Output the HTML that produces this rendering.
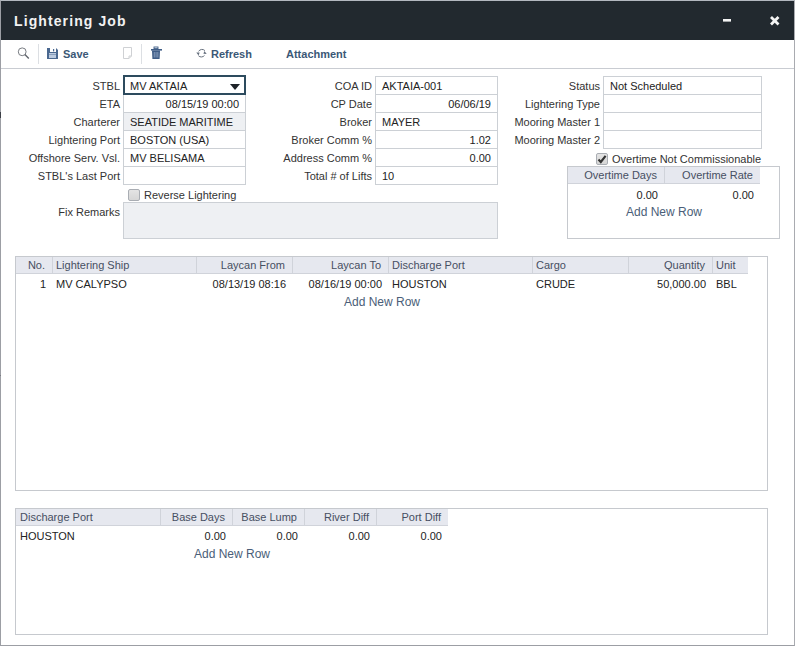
<!DOCTYPE html>
<html><head><meta charset="utf-8">
<style>
*{box-sizing:border-box;margin:0;padding:0}
html,body{width:795px;height:646px;overflow:hidden;background:#fff}
body{position:relative;font-family:"Liberation Sans",sans-serif;font-size:11px;color:#333}
.a{position:absolute;white-space:nowrap}
#win{position:absolute;left:0;top:0;width:795px;height:646px;border:1px solid #9c9ea4;border-top-color:#b3b8bf;border-right-color:#a9abb0}
#title{position:absolute;left:1px;top:1px;width:793px;height:39px;background:#22292f}
#title .t{position:absolute;left:13px;top:12px;font-size:14px;line-height:16px;font-weight:bold;letter-spacing:1.1px;color:#f2f2f2}
#tb{position:absolute;left:1px;top:40px;width:793px;height:29px;border-bottom:1px solid #c9ccd2;background:#fff}
.tbt{position:absolute;top:47px;font-weight:bold;color:#3b5876;line-height:14px}
.sep{position:absolute;top:44px;width:1px;height:20px;background:#dcdfe3}
.lbl{position:absolute;text-align:right;line-height:19px;height:19px;padding-top:1px;color:#333}
.inp{position:absolute;height:19px;border:1px solid #ccd0d5;background:#fff;line-height:17px;padding:1px 6px 0;color:#222}
.r{text-align:right}
.ro{background:#eef0f3}
.grid{position:absolute;border:1px solid #c6c9ce;background:#fff}
.gh{position:absolute;top:0;height:17px;background:#e6e8ef;border-bottom:1px solid #d0d3da;border-left:1px solid #d0d3da;line-height:16px;padding:0 7px 0 3px;color:#474f62}
.gd{position:absolute;line-height:14px;padding:0 6px 0 4px;color:#222}
.add{position:absolute;font-size:12px;line-height:14px;color:#4a5e78}
.cb{position:absolute;width:12px;height:12px;border:1px solid #a9adb3;border-radius:2px;background:linear-gradient(#e4e4e4,#d6d6d6)}
</style></head><body>
<div id="win"></div>
<div class="a" style="left:0;top:112px;width:1px;height:6px;background:#3c3f46"></div>
<div class="a" style="left:0;top:375px;width:1px;height:1px;background:#7a7c82"></div>
<div id="title"><div class="t">Lightering Job</div>
</div>
<div id="tb"></div>

<!-- toolbar text -->
<div class="a tbt" style="left:63px">Save</div>
<div class="a tbt" style="left:211px">Refresh</div>
<div class="a tbt" style="left:286px">Attachment</div>
<div class="sep" style="left:38px"></div>
<div class="sep" style="left:141px"></div>

<!-- Left column -->
<div class="lbl" style="left:0;width:120px;top:76px">STBL</div>
<div class="lbl" style="left:0;width:120px;top:94px">ETA</div>
<div class="lbl" style="left:0;width:120px;top:112px">Charterer</div>
<div class="lbl" style="left:0;width:120px;top:130px">Lightering Port</div>
<div class="lbl" style="left:0;width:120px;top:148px">Offshore Serv. Vsl.</div>
<div class="lbl" style="left:0;width:120px;top:166px">STBL's Last Port</div>

<div class="inp r" style="left:123px;top:94px;width:123px">08/15/19 00:00</div>
<div class="inp ro" style="left:123px;top:112px;width:123px">SEATIDE MARITIME</div>
<div class="inp" style="left:123px;top:130px;width:123px">BOSTON (USA)</div>
<div class="inp" style="left:123px;top:148px;width:123px">MV BELISAMA</div>
<div class="inp" style="left:123px;top:166px;width:123px"></div>
<div class="inp" style="left:123px;top:75px;width:123px;height:20px;border:2px solid #2d4b5e;padding-left:5px;line-height:16px">MV AKTAIA</div>
<svg class="a" style="left:230px;top:84px" width="10" height="6" viewBox="0 0 10 6"><path d="M0 0 H10 L5 6 Z" fill="#1e2328"/></svg>

<!-- Middle column -->
<div class="lbl" style="left:250px;width:122px;top:76px">COA ID</div>
<div class="lbl" style="left:250px;width:122px;top:94px">CP Date</div>
<div class="lbl" style="left:250px;width:122px;top:112px">Broker</div>
<div class="lbl" style="left:250px;width:122px;top:130px">Broker Comm %</div>
<div class="lbl" style="left:250px;width:122px;top:148px">Address Comm %</div>
<div class="lbl" style="left:250px;width:122px;top:166px">Total # of Lifts</div>
<div class="inp" style="left:375px;top:76px;width:123px">AKTAIA-001</div>
<div class="inp r" style="left:375px;top:94px;width:123px">06/06/19</div>
<div class="inp" style="left:375px;top:112px;width:123px">MAYER</div>
<div class="inp r" style="left:375px;top:130px;width:123px">1.02</div>
<div class="inp r" style="left:375px;top:148px;width:123px">0.00</div>
<div class="inp" style="left:375px;top:166px;width:123px">10</div>

<!-- Right column -->
<div class="lbl" style="left:480px;width:120px;top:76px">Status</div>
<div class="lbl" style="left:480px;width:120px;top:94px">Lightering Type</div>
<div class="lbl" style="left:480px;width:120px;top:112px">Mooring Master 1</div>
<div class="lbl" style="left:480px;width:120px;top:130px">Mooring Master 2</div>
<div class="inp" style="left:603px;top:76px;width:159px">Not Scheduled</div>
<div class="inp" style="left:603px;top:94px;width:159px"></div>
<div class="inp" style="left:603px;top:112px;width:159px"></div>
<div class="inp" style="left:603px;top:130px;width:159px"></div>

<!-- checkboxes -->
<div class="cb" style="left:596px;top:153px"></div>
<div class="a" style="left:612px;top:152px;line-height:14px">Overtime Not Commissionable</div>
<div class="cb" style="left:128px;top:189px"></div>
<div class="a" style="left:144px;top:188px;line-height:14px">Reverse Lightering</div>

<div class="lbl" style="left:0;width:120px;top:202px;line-height:19px">Fix Remarks</div>
<div class="inp ro" style="left:123px;top:202px;width:375px;height:37px"></div>

<!-- overtime grid -->
<div class="grid" style="left:567px;top:166px;width:213px;height:73px">
  <div class="gh r" style="left:0;width:96px;border-left:0;padding-left:4px">Overtime Days</div>
  <div class="gh r" style="left:96px;width:96px">Overtime Rate</div>
  <div class="gd r" style="left:0;width:96px;top:21px">0.00</div>
  <div class="gd r" style="left:96px;width:96px;top:21px">0.00</div>
  <div class="add" style="left:0;width:192px;top:38px;text-align:center">Add New Row</div>
</div>

<!-- main grid -->
<div class="grid" style="left:15px;top:256px;width:753px;height:235px">
  <div class="gh r" style="left:0;width:36px;border-left:0;padding-left:4px">No.</div>
  <div class="gh" style="left:36px;width:144px">Lightering Ship</div>
  <div class="gh r" style="left:180px;width:96px">Laycan From</div>
  <div class="gh r" style="left:276px;width:96px">Laycan To</div>
  <div class="gh" style="left:372px;width:144px">Discharge Port</div>
  <div class="gh" style="left:516px;width:96px">Cargo</div>
  <div class="gh r" style="left:612px;width:84px">Quantity</div>
  <div class="gh" style="left:696px;width:36px">Unit</div>
  <div class="gd r" style="left:0;width:36px;top:20px">1</div>
  <div class="gd" style="left:36px;width:144px;top:20px">MV CALYPSO</div>
  <div class="gd r" style="left:180px;width:96px;top:20px">08/13/19 08:16</div>
  <div class="gd r" style="left:276px;width:96px;top:20px">08/16/19 00:00</div>
  <div class="gd" style="left:372px;width:144px;top:20px">HOUSTON</div>
  <div class="gd" style="left:516px;width:96px;top:20px">CRUDE</div>
  <div class="gd r" style="left:612px;width:84px;top:20px">50,000.00</div>
  <div class="gd" style="left:696px;width:36px;top:20px">BBL</div>
  <div class="add" style="left:0;width:732px;top:38px;text-align:center">Add New Row</div>
</div>

<!-- bottom grid -->
<div class="grid" style="left:15px;top:508px;width:753px;height:127px">
  <div class="gh" style="left:0;width:144px;border-left:0;padding-left:4px">Discharge Port</div>
  <div class="gh r" style="left:144px;width:72px">Base Days</div>
  <div class="gh r" style="left:216px;width:72px">Base Lump</div>
  <div class="gh r" style="left:288px;width:72px">River Diff</div>
  <div class="gh r" style="left:360px;width:72px">Port Diff</div>
  <div class="gd" style="left:0;width:144px;top:20px">HOUSTON</div>
  <div class="gd r" style="left:144px;width:72px;top:20px">0.00</div>
  <div class="gd r" style="left:216px;width:72px;top:20px">0.00</div>
  <div class="gd r" style="left:288px;width:72px;top:20px">0.00</div>
  <div class="gd r" style="left:360px;width:72px;top:20px">0.00</div>
  <div class="add" style="left:0;width:432px;top:38px;text-align:center">Add New Row</div>
</div>

<!-- icons -->
<svg class="a" style="left:0;top:0" width="795" height="70" viewBox="0 0 795 70">
  <!-- search -->
  <circle cx="22.2" cy="51.8" r="3.9" fill="none" stroke="#6a6e75" stroke-width="0.9"/>
  <line x1="24.9" y1="54.6" x2="28.8" y2="58.4" stroke="#5f636a" stroke-width="1.4"/>
  <!-- floppy -->
  <path d="M47 48 H56 L58 50 V59 H47 Z" fill="#4a6890"/>
  <rect x="50" y="48" width="6" height="4" fill="#fff"/>
  <rect x="53" y="49" width="1.2" height="2.4" fill="#4a6890"/>
  <rect x="49" y="53" width="7" height="5" fill="#bccbe0"/>
  <rect x="49" y="54" width="7" height="0.8" fill="#7d95b5"/>
  <!-- doc -->
  <path d="M123.5 47.5 H131.5 V56 L129 58.5 H123.5 Z" fill="#fff" stroke="#cfd1d4" stroke-width="1"/>
  <path d="M131.5 56 L129 56 L129 58.5" fill="none" stroke="#cfd1d4" stroke-width="1"/>
  <!-- trash -->
  <rect x="154" y="47" width="4" height="1.6" fill="none" stroke="#3f5d86" stroke-width="0.9"/>
  <rect x="151" y="49" width="11" height="1.6" fill="#3f5d86"/>
  <path d="M152 50.5 H160 L159.6 59 H152.4 Z" fill="#3f5d86"/>
  <rect x="153.8" y="52" width="0.9" height="5.5" fill="#8ea3c0"/>
  <rect x="155.6" y="52" width="0.9" height="5.5" fill="#8ea3c0"/>
  <rect x="157.4" y="52" width="0.9" height="5.5" fill="#8ea3c0"/>
  <!-- refresh -->
  <path d="M198.6 51.4 A4 4 0 0 1 204.9 50.6" fill="none" stroke="#66707e" stroke-width="1"/>
  <path d="M204.5 55.4 A4 4 0 0 1 198.5 55.8" fill="none" stroke="#66707e" stroke-width="1"/>
  <path d="M196.3 52.4 L199.6 52.6 L198.6 55.4 Z" fill="#66707e"/>
  <path d="M206.7 54 L203.4 53.8 L204.4 51 Z" fill="#66707e"/>
  <!-- minimize -->
  <rect x="723" y="19" width="8" height="2.6" fill="#f4f4f4"/>
  <!-- close -->
  <path d="M771 17 L778.5 24.5 M778.5 17 L771 24.5" stroke="#f4f4f4" stroke-width="2.8"/>
</svg>
<svg class="a" style="left:596px;top:153px" width="12" height="12" viewBox="0 0 12 12">
  <path d="M2.5 6.5 L4.8 9 L9.6 2.8" fill="none" stroke="#333" stroke-width="2.1"/>
</svg>

</body></html>
